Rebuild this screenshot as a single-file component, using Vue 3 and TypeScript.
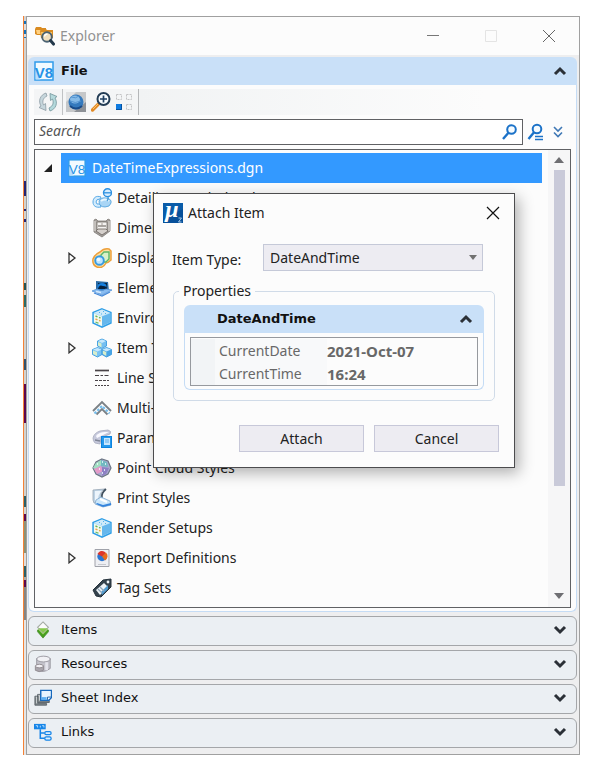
<script setup lang="ts">
import { ref } from 'vue'

interface TreeRow {
  label: string
  icon: string
  expandable?: boolean
}

const icons: Record<string, string> = {
  explorer: `
    <path d="M0 3l1-2h5l1 1h4v7H2L0 8z" fill="#d98b21"/><path d="M1 4h9v4H2z" fill="#ffd080"/>
    <path d="M5 5l1-2h5l1 1h6v8H6z" fill="#d98b21"/><path d="M6 6h11v6H7z" fill="#fbc766"/>
    <circle cx="12" cy="11" r="4.800" fill="#f2dfbd" stroke="#4b6272" stroke-width="1.900"/>
    <path d="M9.500 10.500a3 3 0 0 1 3-2.500" stroke="#fff" stroke-width="1.300" fill="none"/>
    <path d="M15.500 14.600l3 3.500" stroke="#23394b" stroke-width="3" stroke-linecap="round"/>`,
  v8: `
    <rect x="1" y="1" width="18" height="18" fill="#f2faff" stroke="#2f9bea" stroke-width="1.500"/>
    <path d="M1.500 18.500V8l5 10.500z" fill="#b9e0fb"/>
    <text x="10" y="16.500" text-anchor="middle" font-family="Liberation Sans, sans-serif" font-size="15" fill="#2692e6">V8</text>`,
  refresh: `
    <path d="M8 1C2 3 0 9 3 14l-2 1.500 7 3-.5-7-2 1.500C4 9 5 6 9 4z" fill="#c6d6dc" stroke="#8b9ba3" stroke-width=".8"/>
    <path d="M12 19c6-2 8-8 5-13l2-1.500-7-3 .5 7 2-1.500c1.500 4 .5 7-3.500 9z" fill="#b4d9dc" stroke="#719399" stroke-width=".8"/>`,
  globe: `
    <path d="M0 0h20v20H0z" fill="#c5c7c9"/><path d="M0 0h10L0 10z" fill="#e2e3e4"/><path d="M20 10v10H8z" fill="#8d9197"/>
    <circle cx="10" cy="10" r="7.500" fill="#3479bd"/><ellipse cx="9" cy="7.500" rx="5" ry="4" fill="#86bbe8"/>
    <path d="M5 5q5 2 8-1M4 9q5 3 11 0" stroke="#5594d0" fill="none"/><path d="M4 14q6 5 12 0" stroke="#194b89" stroke-width="2" fill="none"/>`,
  zoomin: `
    <path d="M7 12.500L1.500 18" stroke="#e28a25" stroke-width="3.400" stroke-linecap="round"/><path d="M7 12l-5 5" stroke="#ffc36b" stroke-width="1"/>
    <circle cx="12.500" cy="7" r="6" fill="#f8fcff" stroke="#233c55" stroke-width="2"/>
    <path d="M9 7h7M12.500 3.500v7" stroke="#1f3f62" stroke-width="1.700"/>`,
  tiles: `
    <g fill="none" stroke="#c3c3c5" stroke-dasharray="2 1"><rect x="1.500" y="2.500" width="5" height="5"/><rect x="11.500" y="2.500" width="5" height="5"/><rect x="11.500" y="12.500" width="5" height="5"/></g>
    <rect x="1" y="12" width="6" height="6" fill="#0f7be0"/><path d="M1 17.500h5.500V12" stroke="#0752a0" fill="none"/>`,
  detailing: `
    <circle cx="15.500" cy="4.800" r="4" fill="#d6edff" stroke="#2d90e0" stroke-width="1.400"/><path d="M12 4.800h7" stroke="#2d90e0" stroke-width="1.300"/>
    <path d="M9 9C4 7 1 10 1 14s3 6 8 5l-1-3q-4 1-4-2 0-3 4-3z" fill="#d4ecfc" stroke="#58a9e6"/>
    <path d="M7 13q2-4 7-3 6 1 5 5-1 4-6 4-6 0-6-6z" fill="#a9d5f5" stroke="#4a9eda" stroke-width=".8"/><path d="M9 13q4-3 8 0" stroke="#e9f7ff" stroke-width="2" fill="none"/><path d="M16 9q1 2-1 4" stroke="#4a9eda" stroke-width="1.500" fill="none"/>`,
  dimension: `
    <path d="M2 2l2-1 2 2h8l2-2 2 1v11l-8 6-8-5z" fill="#a39f9b" stroke="#807b77" stroke-width=".8"/>
    <path d="M5 4h10v8H5z" fill="#f5f3f1" stroke="#746f6b" stroke-width=".8"/><path d="M4 13l6 4 6-4-2-2H6z" fill="#d5d0cc" stroke="#69635e" stroke-width=".8"/>
    <path d="M3 3v10M17 3v10" stroke="#d0ccc8" stroke-width="1.500"/><path d="M6 8h8" stroke="#5d5751"/><path d="M10 5v3" stroke="#a39c96"/>`,
  display: `
    <path d="M8 4q4-4 9-3l2 2v9q-3 3-5 3-3 6-9 4-5-2-4-8 1-4 7-7z" fill="#ffe0a2" stroke="#eda03b" stroke-width="1.500"/>
    <path d="M9 7l3-3h5v7l-3 3H9z" fill="#d9f1c8" stroke="#5bb768" stroke-width="1.400"/>
    <circle cx="7.500" cy="12.500" r="4.300" fill="#bfe5fc" stroke="#369ae2" stroke-width="1.900"/><circle cx="6.500" cy="11.500" r="1.800" fill="#f0faff"/>`,
  element: `
    <path d="M4 3l12 1 1 9-13 1z" fill="#2b6ba5"/><path d="M6 5h9v6H6z" fill="#0b2640"/>
    <ellipse cx="10" cy="8.500" rx="4.500" ry="3.500" fill="#1781e1"/><path d="M6 11q1-5 5-3 4 0 4 3z" fill="#08213c"/>
    <path d="M0 13l5-2q5 3 9 0l6 1-10 5z" fill="#88bcf1" stroke="#5794d8" stroke-width=".8"/><path d="M2 15l8 3 8-4" stroke="#4388d8" stroke-width="1.300" fill="none"/><path d="M4 13.500l5 1" stroke="#d5eafd" stroke-width="1.500"/>`,
  cube: `
    <path d="M10 .800l9 3.700v10.500l-9 4.200-9-4.200V4.500z" fill="#a6d8f8" stroke="#309fe6" stroke-width="1.400"/>
    <path d="M2 5.500l8 3.200V18l-8-3.500z" fill="#f4f9ef"/><path d="M2 4.800l8-3.300 8 3.300-8 3.500z" fill="#cdeafa"/>
    <path d="M10 8.500V18l8.300-3.700V5.200z" fill="#65b7ed"/><path d="M3.500 8l2 .8m1.500.6l1.500.6" stroke="#66b85c" stroke-width="1.400"/><path d="M3.500 11l2 .8m1.500.6l1.500.6" stroke="#efa247" stroke-width="1.400"/><path d="M3.500 14l3 1.200" stroke="#66b85c" stroke-width="1.200"/>
    <path d="M7 4.500h1m3-1h1m1 2h1M9 6h1" stroke="#53aee8" stroke-width="1.200"/>`,
  items: `
    <g stroke="#3c9ce0" stroke-width=".9"><path d="M10 1l4.500 2v5L10 10.500 5.500 8V3z" fill="#74bff1"/><path d="M5.500 9.500l4.500 2v5l-4.500 2.500-5-2.500v-5z" fill="#78c3f3"/><path d="M14.500 9.500l5 2v5l-5 2.500-4.500-2.500v-5z" fill="#48a5e6"/></g>
    <path d="M6 3l4-1.500L14 3l-4 2zM1 11.500l4.500-1.500 4 1.500-4 2zM10.500 11.500l4-1.500 4.500 1.500-4.500 2z" fill="#c6e8fd"/>
    <path d="M6 4l3.500 1.500V9.500L6 7.500zM1 12.500L5 14v4l-4-2zM10.800 12.500l3.500 1.500v4l-3.500-2z" fill="#d7edcc"/>`,
  linestyle: `
    <g stroke="#494347" stroke-width="1.200"><path d="M3 2.500h14" stroke-width="1.700"/><path d="M3 7.500h14" stroke-dasharray="4 1.500 2.500 1.500"/><path d="M3 12.500h14" stroke-dasharray="3 1"/><path d="M3 17.500h14" stroke-dasharray="2 1"/></g>`,
  multiline: `
    <path d="M1 13l9-9 9 9M4.500 16.500L10 11l5.500 5.500" stroke="#7b8186" stroke-width="1.900" fill="none"/>
    <path d="M2.500 15.500L10 8l7.500 7.500" stroke="#75bdec" stroke-width="2.200" stroke-dasharray="2.500 1.500" fill="none"/>`,
  parameter: `
    <path d="M1 10Q2 5 8 3l8-1q4 1 2 4l-5 2-4 3-1 5-5-1q-2-2-2-5z" fill="#c6c9dc" stroke="#a6a9bd" stroke-width=".8"/><path d="M4 8q3-4 9-4l4 0-6 3-6 3z" fill="#f9f9ff"/><path d="M3 12l5 1" stroke="#7e8495" stroke-width="1.500"/>
    <rect x="9.500" y="8.500" width="10" height="11" fill="#2699ed" stroke="#0c83df"/><rect x="12" y="10" width="6" height="7" fill="#c8e7ff"/><path d="M13 12h4M13 14h4" stroke="#3f9fe3" stroke-width=".8"/>`,
  pointcloud: `
    <path d="M10 1l6 2 3 7-3 6-6 3-6-3-3-6 3-6z" fill="#a9a6cf" stroke="#6c7684" stroke-width="1.200"/>
    <path d="M4 5l5-3v5l-5 4-3-1z" fill="#a1dfc2"/><path d="M9 2l6 2 1 5-7-1z" fill="#72b9c2"/><path d="M2 11l7-3 2 5-6 3z" fill="#e49bc9"/><path d="M10 9l7 1-3 6-4 2z" fill="#8d80c4"/>
    <path d="M5 6h1m4-2h1m2 2h1m-7 5h1m4 1h1m-3 3h1" stroke="#f1ffff" stroke-width="1.500"/>`,
  print: `
    <path d="M1 2l12-1Q8 3 9 8l-3 6-4 1-1-3z" fill="#bed3e5" stroke="#98a6b4" stroke-width=".8"/><path d="M3 3h7Q6 6 6 12l-3 1z" fill="#edf5fc"/>
    <path d="M14 1Q9 5 10 10" stroke="#40505f" stroke-width="1.800" fill="none"/>
    <path d="M4 12l5-3 9 4 1 4-8 2-8-3z" fill="#cce7fa" stroke="#82a7cb" stroke-width=".8"/><path d="M5 15l6 2 8-2v2l-8 2-7-3z" fill="#3484dd"/><path d="M8 11l7 3" stroke="#fff" stroke-width="2"/>`,
  report: `
    <path d="M3 1.500h14v17H3z" fill="#eeeff3" stroke="#a0a2aa"/>
    <circle cx="10" cy="8.500" r="4.700" fill="#2b77d3"/><path d="M10 8.500L5.500 6a5 5 0 0 1 8.500-1z" fill="#df3529"/><path d="M10 8.500l4-4a5 5 0 0 1-1 8z" fill="#e96b1b"/><path d="M6 16.500h8" stroke="#c6c8ce"/>`,
  tag: `
    <path d="M1 12L11 2l8-1v8L9 19l-5-1z" fill="#34424d" stroke="#26323c"/><path d="M4 12l8-7 4 4-8 8z" fill="#eef4f8"/>
    <path d="M9 14l7-7v4l-6 6z" fill="#509bd0"/><path d="M6 11l4 4m-2-6l4 4" stroke="#8fa6b9" stroke-width="1.300"/><circle cx="16" cy="4" r="1.400" fill="#eef4f8"/>`,
  diamonds: `
    <path d="M10 8l6 2v2l-6 7-6-7v-2z" fill="#469d1d" stroke="#438a28" stroke-width=".8"/><path d="M4 9h12l-6 6z" fill="#9ed862"/>
    <path d="M10 1l6 6-6 6-6-6z" fill="#fbfbfb" stroke="#a4aaa4" stroke-width="1.200"/><path d="M5 8h10l-5 5z" fill="#86c94b"/>`,
  resources: `
    <path d="M3 4v12q7 5 15-1V4z" fill="#c4c3cc" stroke="#95939c"/><ellipse cx="10.500" cy="4.500" rx="7.500" ry="3.200" fill="#f1f1f5" stroke="#95939c"/>
    <path d="M14 8v9" stroke="#e5e4ed" stroke-width="3"/><path d="M1.500 12v5q4 3 9 0v-5z" fill="#aaa6ad" stroke="#8e898f"/><ellipse cx="6" cy="12.300" rx="4.300" ry="2" fill="#f2f0f4" stroke="#8e898f"/>`,
  sheets: `
    <path d="M1 8h3v8h10v2H1zM4 6h3v7h10v2H4z" fill="#7d8488" stroke="#51595f" stroke-width=".9"/><path d="M2 9h1v7m2-9h1v6" stroke="#e1e5e8" fill="none"/>
    <path d="M7.500 1.500h12v8l-3 3h-9z" fill="#e6f4ff" stroke="#1769bd" stroke-width="1.600"/><path d="M8 9h6v3H8z" fill="#5baff3"/><path d="M15 12V9h4" fill="#fff" stroke="#145aa3"/>`,
  links: `
    <rect x="0" y="1" width="13" height="6" fill="#1685e8"/><path d="M2 3h2v2m3-2v2m2-2h2v2" stroke="#c2e3ff" fill="none"/>
    <path d="M7 7v10h5M7 11h5" stroke="#1685e8" stroke-width="1.700" fill="none"/>
    <rect x="12" y="9.500" width="7" height="3.500" rx="1.500" fill="#dcefff" stroke="#1685e8" stroke-width="1.400"/><rect x="12" y="15.500" width="7" height="3.500" rx="1.500" fill="#dcefff" stroke="#1685e8" stroke-width="1.400"/>`,
  mu: `
    <rect width="20" height="20" fill="#07509a"/><path d="M0 0h20v6L0 16z" fill="#0a5ca9"/>
    <text x="9" y="14" text-anchor="middle" font-family="Liberation Serif, serif" font-size="24" font-weight="bold" font-style="italic" fill="#fff">μ</text>
    <path d="M15.500 15h3l-3 4h3" stroke="#b7d5ee" stroke-width=".9" fill="none"/>`,
}

const rows: TreeRow[] = [
  { label: 'Detailing Symbol Styles', icon: 'detailing' },
  { label: 'Dimension Styles', icon: 'dimension' },
  { label: 'Display Styles', icon: 'display', expandable: true },
  { label: 'Element Templates', icon: 'element' },
  { label: 'Environments', icon: 'cube' },
  { label: 'Item Types', icon: 'items', expandable: true },
  { label: 'Line Styles', icon: 'linestyle' },
  { label: 'Multi-line Styles', icon: 'multiline' },
  { label: 'Parameter Sets', icon: 'parameter' },
  { label: 'Point Cloud Styles', icon: 'pointcloud' },
  { label: 'Print Styles', icon: 'print' },
  { label: 'Render Setups', icon: 'cube' },
  { label: 'Report Definitions', icon: 'report', expandable: true },
  { label: 'Tag Sets', icon: 'tag' },
]

const sections = [
  { label: 'Items', icon: 'diamonds' },
  { label: 'Resources', icon: 'resources' },
  { label: 'Sheet Index', icon: 'sheets' },
  { label: 'Links', icon: 'links' },
]

const tools = [
  { label: 'Refresh', icon: 'refresh' },
  { label: 'Web', icon: 'globe' },
  { label: 'Zoom in', icon: 'zoomin' },
  { label: 'Tiles', icon: 'tiles' },
]

const properties = [
  { name: 'CurrentDate', value: '2021-Oct-07' },
  { name: 'CurrentTime', value: '16:24' },
]

const query = ref('')
const itemType = ref('DateAndTime')
</script>

<template>
  <div class="desktop">
    <div class="canvas-edge"></div>
    <main class="window">
      <header class="titlebar">
        <svg class="icon" viewBox="0 0 20 20" v-html="icons.explorer"></svg>
        <h1>Explorer</h1>
        <div class="controls">
          <button aria-label="Minimize"><svg viewBox="0 0 14 14"><path d="M1 6.500h12" stroke="#777" /></svg></button>
          <button aria-label="Maximize" disabled><svg viewBox="0 0 14 14"><path d="M1.500 1.500h11v11h-11z" stroke="#e4e4e4" fill="none" /></svg></button>
          <button aria-label="Close"><svg viewBox="0 0 14 14"><path d="M1 1l12 12M13 1L1 13" stroke="#666" /></svg></button>
        </div>
      </header>

      <div class="panels">
        <section class="panel">
          <button class="panel-head">
            <svg class="icon" viewBox="0 0 20 20" v-html="icons.v8"></svg>
            <span>File</span>
            <svg class="chevron" viewBox="0 0 14 10"><path d="M2 8l5-5 5 5" /></svg>
          </button>
          <div class="panel-body">
            <div class="toolbar">
              <button v-for="tool in tools" :key="tool.icon" :aria-label="tool.label">
                <svg class="icon" viewBox="0 0 20 20" v-html="icons[tool.icon]"></svg>
              </button>
              <span class="toolbar-rest"></span>
            </div>

            <div class="search-row">
              <div class="search-box">
                <input v-model="query" type="text" placeholder="Search" aria-label="Search" />
                <button aria-label="Find">
                  <svg viewBox="0 0 18 18"><circle cx="10.500" cy="6.500" r="4.300" fill="#f5fbff" stroke="#1b72c8" stroke-width="2" /><path d="M7.500 9.700L2 16" stroke="#1b72c8" stroke-width="2.400" /></svg>
                </button>
              </div>
              <button aria-label="Advanced search">
                <svg viewBox="0 0 18 18"><circle cx="10" cy="6" r="4.300" fill="#f5fbff" stroke="#1b72c8" stroke-width="2" /><path d="M7 9.300L1.500 16" stroke="#1b72c8" stroke-width="2.400" /><path d="M8 13.500h8M8 16.500h8" stroke="#1b72c8" stroke-width="1.500" /></svg>
              </button>
              <button class="more" aria-label="More options">
                <svg viewBox="0 0 12 14"><path d="M2 2l4 4 4-4M2 7.500l4 4 4-4" stroke="#3f78b5" stroke-width="1.600" fill="none" /></svg>
              </button>
            </div>

            <div class="tree-frame">
              <ul class="tree">
                <li class="root">
                  <button class="toggle" aria-label="Collapse"><svg viewBox="0 0 10 12"><path d="M9 2v8H1z" fill="#222" /></svg></button>
                  <div class="selected">
                    <svg class="root-icon" viewBox="0 0 20 20" v-html="icons.v8"></svg>
                    <span>DateTimeExpressions.dgn</span>
                  </div>
                </li>
                <li v-for="row in rows" :key="row.label" class="node">
                  <span class="slot">
                    <button v-if="row.expandable" class="toggle" aria-label="Expand">
                      <svg viewBox="0 0 10 12"><path d="M2 1.200L8 6 2 10.800z" fill="none" stroke="#333" stroke-width="1.300" /></svg>
                    </button>
                  </span>
                  <svg class="icon" viewBox="0 0 20 20" v-html="icons[row.icon]"></svg>
                  <span>{{ row.label }}</span>
                </li>
              </ul>
              <div class="scrollbar">
                <svg viewBox="0 0 12 8"><path d="M6 1l5 6H1z" fill="#6e6e72" /></svg>
                <div class="track"><div class="thumb"></div></div>
                <svg viewBox="0 0 12 8"><path d="M1 1h10L6 7z" fill="#6e6e72" /></svg>
              </div>
            </div>
          </div>
        </section>

        <button v-for="section in sections" :key="section.label" class="section">
          <svg class="icon" viewBox="0 0 20 20" v-html="icons[section.icon]"></svg>
          <span>{{ section.label }}</span>
          <svg class="chevron" viewBox="0 0 14 10"><path d="M2 2l5 5 5-5" /></svg>
        </button>
      </div>
    </main>

    <div class="dialog" role="dialog" aria-labelledby="dialog-title">
      <header class="dialog-title">
        <svg class="icon" viewBox="0 0 20 20" v-html="icons.mu"></svg>
        <h2 id="dialog-title">Attach Item</h2>
        <button aria-label="Close dialog"><svg viewBox="0 0 14 14"><path d="M1 1l12 12M13 1L1 13" stroke="#111" stroke-width="1.200" /></svg></button>
      </header>
      <div class="dialog-body">
        <div class="field">
          <label for="item-type">Item Type:</label>
          <div class="select-wrap">
            <select id="item-type" v-model="itemType"><option>DateAndTime</option></select>
            <svg viewBox="0 0 10 6"><path d="M1 0h8L5 5z" fill="#717171" /></svg>
          </div>
        </div>
        <fieldset>
          <legend>Properties</legend>
          <div class="group">
            <button class="group-head">
              <span>DateAndTime</span>
              <svg class="chevron" viewBox="0 0 14 10"><path d="M2 8l5-5 5 5" /></svg>
            </button>
            <div class="group-body">
              <table>
                <tbody>
                  <tr v-for="property in properties" :key="property.name">
                    <th scope="row">{{ property.name }}</th>
                    <td>{{ property.value }}</td>
                  </tr>
                </tbody>
              </table>
            </div>
          </div>
        </fieldset>
        <footer>
          <button>Attach</button>
          <button>Cancel</button>
        </footer>
      </div>
    </div>
  </div>
</template>

<style>
body {
  background: #fff;
}
</style>

<style scoped>
* {
  box-sizing: border-box;
}
.desktop {
  position: relative;
  display: flex;
  padding: 16px 20px 17px 23px;
  font: 14px/20px "Noto Sans", sans-serif;
  color: #222;
}
button {
  padding: 0;
  border: 0;
  background: none;
  font: inherit;
  color: inherit;
}
svg {
  display: block;
  flex: none;
}
.icon {
  width: 20px;
  height: 20px;
}
.canvas-edge {
  width: 3px;
  flex: none;
  border-left: 1px solid #f58235;
  background: linear-gradient(#d4d4d4 5px, #1670b8 5px 8px, #ddd 8px 14px, #1670b8 14px 18px, #ddd 18px 21px, #1670b8 21px 22px, #d2d2cf 22px 165px, #242475 165px 180px, #d2d2cf 180px 193px, #242475 193px 195px, #d2d2cf 195px 203px, #242475 203px 206px, #d2d2cf 206px 267px, #235457 267px 274px, #d2d2cf 274px 279px, #2a6b68 279px 291px, #d2d2cf 291px 343px, #33516c 343px 354px, #d2d2cf 354px 368px, #5b0750 368px 407px, #d2d2cf 407px 480px, #2a5f68 480px 491px, #d2d2cf 491px 498px, #5b0750 498px 505px, #8b9278 505px 537px, #ddd 537px 550px, #2a5f68 550px 561px, #aaa 561px 564px, #5b0750 564px 571px, #858585 571px 604px, #e5e5e5 604px);
}
.window {
  flex: 1;
  min-width: 0;
  border: 1px solid #a0a0a0;
  background: #eeeeef;
}
.titlebar {
  display: flex;
  align-items: center;
  height: 38px;
  padding: 0 23px 0 8px;
  background: #fcfcfc;
}
.titlebar h1 {
  flex: 1;
  margin: 0 0 0 5px;
  font-size: 14px;
  font-weight: 400;
  color: #929292;
}
.controls {
  display: flex;
  gap: 44px;
}
.controls svg,
.dialog-title button svg {
  width: 14px;
  height: 14px;
}
.panels {
  display: flex;
  flex-direction: column;
  gap: 4px;
  padding: 2px 2px 6px 1px;
}
.panel-head,
.section {
  display: flex;
  align-items: center;
  width: 100%;
  padding: 0 10px 0 6px;
  font: 13px/18px "DejaVu Sans", sans-serif;
  text-align: left;
  color: #111;
}
.panel-head {
  height: 28px;
  border-radius: 6px 6px 0 0;
  background: #c9e0f8;
  font-weight: 700;
}
.panel-head span,
.section span {
  flex: 1;
  padding-left: 7px;
}
.section {
  height: 30px;
  padding: 0 9px 2px 5px;
  border: 1px solid #a4a6a9;
  border-radius: 6px;
  background: #ebeff3;
}
.section .icon {
  width: 18px;
  height: 18px;
}
.section span {
  padding-left: 9px;
}
.chevron {
  width: 14px;
  height: 10px;
  fill: none;
  stroke: #2b3037;
  stroke-width: 3;
}
.panel-body {
  padding: 4px 5px 3px 5px;
  border: 1px solid #c5dcf5;
  border-top: 0;
  border-radius: 0 0 6px 6px;
  background: #fcfcfc;
}
.toolbar {
  display: flex;
  align-items: center;
  height: 26px;
}
.toolbar button {
  display: grid;
  place-items: center;
  width: 26px;
  height: 26px;
  background: #f4f5f6;
}
.toolbar button:first-child {
  width: 29px;
  border-right: 1px solid #c0c2c4;
}
.toolbar button:nth-child(3) {
  width: 23px;
}
.toolbar-rest {
  flex: 1;
  height: 26px;
  border-left: 1px solid #b5b7b9;
  background: linear-gradient(90deg, #f1f3f4, #fcfcfc 80%);
}
.search-row {
  display: flex;
  align-items: center;
  gap: 4px;
  margin: 4px 0;
}
.search-row svg {
  width: 18px;
  height: 18px;
}
.search-row .more {
  padding: 0 7px 0 3px;
}
.search-row .more svg {
  width: 12px;
  height: 14px;
}
.search-box {
  display: flex;
  flex: 1;
  align-items: center;
  height: 26px;
  padding-right: 3px;
  border: 1px solid #606164;
  background: #fff;
}
.search-box input {
  flex: 1;
  min-width: 0;
  padding: 0 4px 3px;
  border: 0;
  outline: 0;
  background: none;
  font: italic 14px/20px "Noto Sans", sans-serif;
  color: #222;
}
.search-box input::placeholder {
  color: #555;
  opacity: 1;
}
.tree-frame {
  display: flex;
  border: 1px solid #606164;
  background: #fcfcfc;
}
.tree {
  flex: 1;
  min-width: 0;
  margin: 0;
  padding: 3px 6px 4px 8px;
  list-style: none;
}
.tree li {
  display: flex;
  align-items: center;
  height: 30px;
  white-space: nowrap;
}
.toggle {
  display: block;
}
.toggle svg {
  width: 10px;
  height: 12px;
}
.root {
  gap: 8px;
}
.selected {
  display: flex;
  flex: 1;
  align-items: center;
  gap: 6px;
  height: 30px;
  padding-left: 7px;
  background: #3399ff;
  color: #fff;
}
.root-icon {
  width: 18px;
  height: 18px;
}
.node {
  gap: 5px;
}
.slot {
  width: 44px;
  padding-left: 24px;
}
.scrollbar {
  display: flex;
  flex-direction: column;
  align-items: center;
  width: 22px;
  padding: 6px 0 7px;
  background: #f6f6f7;
}
.scrollbar svg {
  width: 12px;
  height: 8px;
}
.track {
  flex: 1;
  width: 11px;
  padding: 6px 0;
}
.thumb {
  height: 76%;
  background: #c9cad9;
}
.dialog {
  position: absolute;
  top: 193px;
  left: 153px;
  width: 362px;
  border: 1px solid #4c4c4e;
  background: #fcfcfc;
  box-shadow: 4px 5px 14px rgba(0, 0, 0, 0.3);
}
.dialog-title {
  display: flex;
  align-items: center;
  height: 37px;
  padding: 0 14px 0 9px;
}
.dialog-title h2 {
  flex: 1;
  margin: 0 0 0 5px;
  font-size: 14px;
  font-weight: 400;
}
.dialog-body {
  padding: 13px 15px 15px 18px;
}
.field {
  display: flex;
  align-items: center;
}
.field label {
  width: 91px;
  padding-top: 4px;
}
.select-wrap {
  position: relative;
  width: 220px;
}
.select-wrap svg {
  position: absolute;
  top: 11px;
  right: 5px;
  width: 10px;
  height: 6px;
}
select {
  width: 100%;
  height: 27px;
  padding: 0 20px 0 6px;
  border: 1px solid #c5c9d8;
  border-radius: 0;
  appearance: none;
  background: #edecf2;
  font: inherit;
  color: #222;
}
fieldset {
  margin: 10px 4px 0 1px;
  padding: 4px 10px 10px;
  border: 1px solid #d0dbe8;
  border-radius: 5px;
}
legend {
  margin-left: -5px;
  padding: 0 4px;
}
.group-head {
  display: flex;
  align-items: center;
  width: 100%;
  height: 28px;
  padding: 0 11px 0 33px;
  border-radius: 6px 6px 0 0;
  background: #c9e0f8;
  font: 700 13px/18px "DejaVu Sans", sans-serif;
  color: #111;
  text-align: left;
}
.group-head span {
  flex: 1;
}
.group-body {
  padding: 4px 5px 3px;
  border: 1px solid #c5dcf5;
  border-top: 0;
  border-radius: 0 0 6px 6px;
}
table {
  width: 100%;
  padding-top: 1px;
  border: 1px solid #96999e;
  border-spacing: 0;
  background: #fcfcfc;
}
th,
td {
  height: 23px;
  padding: 0;
  line-height: 20px;
  text-align: left;
  color: #686868;
}
th {
  width: 136px;
  padding-left: 28px;
  font-weight: 400;
  background: linear-gradient(90deg, #f2f4f6 24px, #f8f9fa 24px);
}
td {
  font-size: 15px;
  font-weight: 700;
}
footer {
  display: flex;
  justify-content: flex-end;
  gap: 10px;
  margin-top: 24px;
}
footer button {
  width: 125px;
  height: 27px;
  border: 1px solid #c7c8d9;
  background: #edecf2;
}
</style>
